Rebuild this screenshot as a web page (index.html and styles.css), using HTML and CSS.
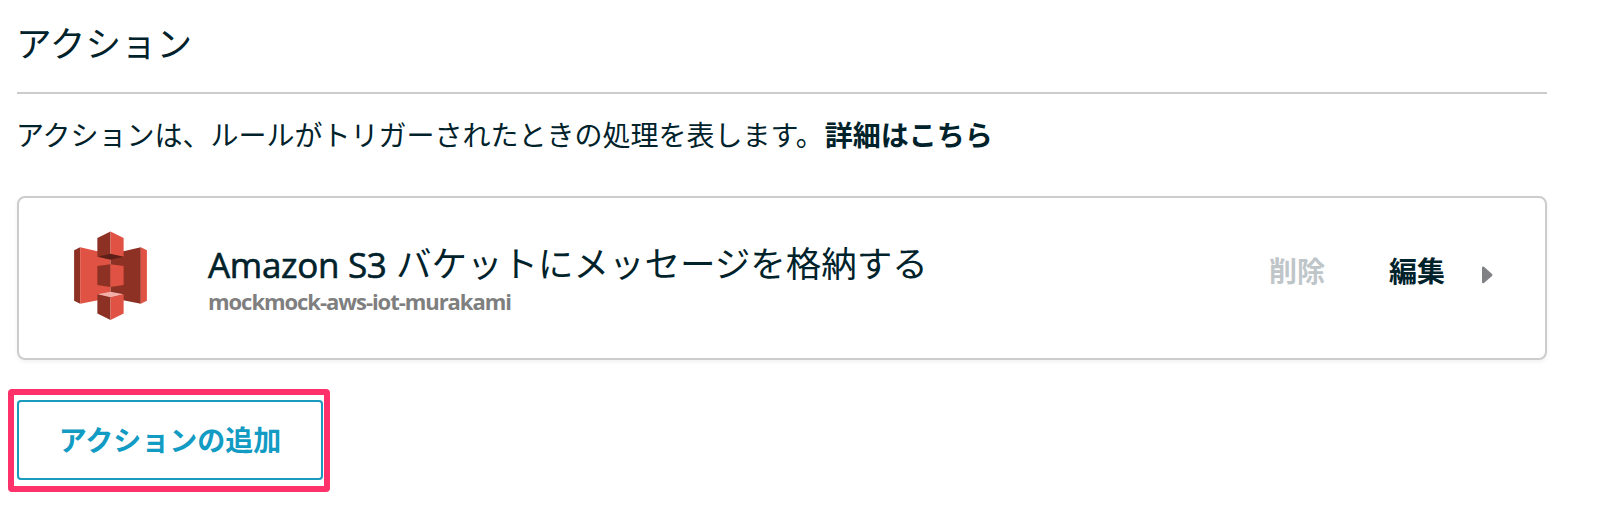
FILE: index.html
```html
<!DOCTYPE html>
<html lang="ja">
<head>
<meta charset="utf-8">
<title>アクション</title>
<link rel="stylesheet" href="styles.css">
</head>
<body>
<main class="panel">
  <h2 class="heading">アクション</h2>
  <p class="description">アクションは、ルールがトリガーされたときの処理を表します。<a class="more">詳細はこちら</a></p>
  <section class="card">
    <svg class="service-icon" width="75" height="91" viewBox="0 0 74 90">
      <path fill="#8c3123" d="M1 19 7 16V72L1 69Z"/>
      <path fill="#e05243" d="M7 16 37 23V66L7 72Z"/>
      <path fill="#8c3123" d="M67 16 37 23V66L67 72Z"/>
      <path fill="#e05243" d="M67 16 73 19V69L67 72Z"/>
      <path fill="#8c3123" d="M24 34.500 37 33V55.500L24 53.500Z"/>
      <path fill="#e05243" d="M50 34.500 37 33V55.500L50 53.500Z"/>
      <path fill="#8c3123" d="M24 7 37 .5V23.500L24 25.500Z"/>
      <path fill="#e05243" d="M50 7 37 .5V23.500L50 25.500Z"/>
      <path fill="#5e1f18" d="M24 25.500 37 22.500 50 25.500 37 28.500Z"/>
      <path fill="#f2b0a9" d="M24 62.500 37 60 50 62.500 37 66Z"/>
      <path fill="#8c3123" d="M24 62.500 37 65.500V88L24 81.500Z"/>
      <path fill="#e05243" d="M50 62.500 37 65.500V88L50 81.500Z"/>
    </svg>
    <div class="details">
      <div class="title"><span class="latin">Amazon S3</span><span class="message">バケットにメッセージを格納する</span></div>
      <div class="bucket">mockmock-aws-iot-murakami</div>
    </div>
    <div class="links">
      <a class="remove">削除</a>
      <a class="edit">編集</a>
      <svg class="arrow" width="11" height="18" viewBox="0 0 11 18"><path fill="#7f8185" d="M0 2Q0 0 2 .7L10 8Q11 9 10 10L2 17Q0 18 0 16Z"/></svg>
    </div>
  </section>
  <div class="highlight"><button class="add">アクションの追加</button></div>
</main>
</body>
</html>
```
FILE: styles.css
```css
body {
  margin: 0;
  background: #fff;
  color: #00222b;
  font-family: "Noto Sans CJK JP", sans-serif;
}
.panel {
  width: 1530px;
  margin-left: 17px;
}
.heading {
  height: 92px;
  margin: 0;
  border-bottom: 2px solid #ccc;
  font-size: 35.6px;
  font-weight: 400;
  line-height: 84px;
  text-indent: -1px;
}
.description {
  margin: 0;
  height: 102px;
  font-size: 28px;
  line-height: 81px;
  white-space: nowrap;
  text-indent: -1px;
}
.more {
  font-weight: 700;
  margin-left: 1px;
}
.card {
  box-sizing: border-box;
  display: flex;
  height: 164px;
  border: 2px solid #ccc;
  border-radius: 8px;
  padding: 0 52px 0 54px;
  box-shadow: 0 2px 4px rgba(0, 0, 0, .06);
}
.service-icon {
  margin-top: 33px;
}
.details {
  margin-left: 60px;
  padding-top: 42px;
  white-space: nowrap;
}
.title {
  display: flex;
  gap: 9px;
  height: 48px;
  font-size: 35.5px;
  line-height: 48px;
}
.latin {
  width: 179px;
  font-family: "Open Sans", sans-serif;
  font-size: 35px;
  letter-spacing: -.3px;
  line-height: 50px;
  -webkit-text-stroke: .6px #00222b;
}
.message {
  line-height: 44px;
}
.bucket {
  color: #7f7f7f;
  font: 700 22px/26px "Open Sans", sans-serif;
  letter-spacing: -1.05px;
}
.links {
  display: flex;
  margin-left: auto;
  height: 40px;
  padding-top: 52px;
  font-size: 28px;
  font-weight: 700;
  line-height: 40px;
}
.remove {
  color: #bfc6c9;
}
.edit {
  margin-left: 64px;
}
.arrow {
  margin: 16px 0 0 37px;
}
.highlight {
  box-sizing: border-box;
  width: 322px;
  height: 103px;
  margin: 29px 0 0 -9px;
  border: 6px solid #ff316b;
  border-radius: 4px;
  padding: 5px 3px;
}
.add {
  box-sizing: border-box;
  width: 306px;
  height: 80px;
  border: 2px solid #1a9abc;
  border-radius: 4px;
  padding: 0 0 3px;
  background: #fff;
  color: #129bc3;
  font: 700 28px/74px "Noto Sans CJK JP", sans-serif;
}
```
